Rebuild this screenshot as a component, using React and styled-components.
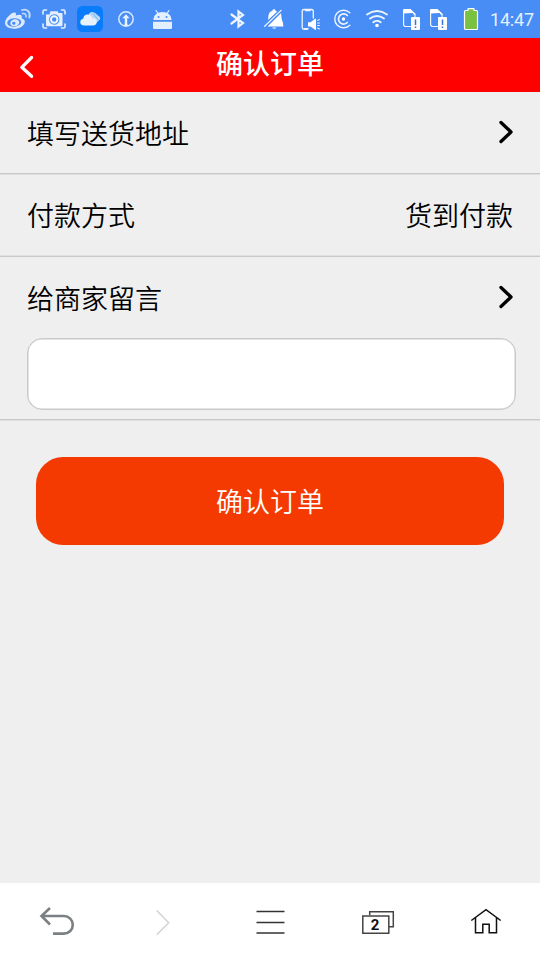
import React from 'react';
import styled, { createGlobalStyle } from 'styled-components';

const GlobalStyle = createGlobalStyle`
  * {
    box-sizing: border-box;
  }
  body {
    margin: 0;
    background: #efefef;
  }
`;

const Page = styled.div`
  display: flex;
  flex-direction: column;
  width: 540px;
  height: 960px;
  overflow: hidden;
  background: #efefef;
  color: #000;
  font-family: 'Noto Sans CJK SC', sans-serif;
  font-size: 27px;
  font-weight: 350;
`;

const StatusBar = styled.div`
  display: flex;
  justify-content: space-between;
  height: 38px;
  background: #488df5;
`;

const StatusGroup = styled.div`
  display: flex;
  align-items: center;
`;

const StatusIcon = styled.svg`
  display: block;
  width: ${props => props.width}px;
  height: 38px;
  fill: none;
  stroke-linecap: round;
  stroke-linejoin: round;
`;

const Clock = styled.span`
  width: 52px;
  padding: 1px 0 0 2px;
  color: #e4effe;
  font: 400 18px/38px Roboto, sans-serif;
  letter-spacing: -0.2px;
`;

const Header = styled.header`
  display: grid;
  grid-template-columns: 54px 1fr 54px;
  height: 54px;
  background: #f00;
  color: #fff;
`;

const Title = styled.h1`
  margin: 0;
  text-align: center;
  font-size: 27px;
  font-weight: 500;
  line-height: 50px;
`;

const BackButton = styled.button`
  display: flex;
  padding: 17px 0 0 19px;
  border: 0;
  background: none;
  color: #fff;
`;

const ChevronSvg = styled.svg`
  display: block;
  width: 15px;
  height: 24px;
  fill: none;
  stroke: currentColor;
  stroke-width: 3.3;
  stroke-linecap: round;
  stroke-linejoin: round;
`;

const Row = styled.div`
  display: flex;
  align-items: center;
  justify-content: space-between;
  height: ${props => props.height || 82}px;
  padding: 0 27px 2px;
  line-height: 40px;
`;

const LinkLabel = styled.span`
  padding-top: 2px;
`;

const Divider = styled.div`
  flex: none;
  height: 2px;
  margin-top: -1px;
  border-top: 1px solid ${props => (props.flip ? '#dfdfdf' : '#c9c9c9')};
  border-bottom: 1px solid ${props => (props.flip ? '#c9c9c9' : '#dfdfdf')};
`;

const MessageInput = styled.input`
  flex: none;
  height: 72px;
  margin: 0 24px 10px 27px;
  padding: 0 14px;
  border: 1px solid #c9c9c9;
  border-radius: 15px;
  background: #fff;
  box-shadow: inset 0 0 0 0.5px #c9c9c9;
  font: inherit;
  outline: none;
`;

const SubmitButton = styled.button`
  flex: none;
  height: 88.5px;
  margin: 35.5px 36px 0;
  padding: 0 0 1px;
  border: 0;
  border-radius: 27px;
  background: #f43a00;
  color: #fff;
  font: inherit;
`;

const NavBar = styled.nav`
  display: flex;
  height: 77px;
  margin-top: auto;
  background: #fff;
`;

const NavIcon = styled.svg`
  display: block;
  width: 108px;
  height: 77px;
  fill: none;
`;

const TabCount = styled.text`
  fill: #111;
  font: 700 15px Roboto, sans-serif;
  text-anchor: middle;
`;

const Chevron = ({ left }) => (
  <ChevronSvg viewBox="0 0 15 24">
    <path d={left ? 'M12.6 2.5 2.8 12.3l9.8 9' : 'M3 2.500 13 12 3 21.500'} />
  </ChevronSvg>
);

const Weibo = () => (
  <StatusIcon width={36} viewBox="0 0 36 38">
    <path
      fill="#dceafc"
      fillRule="evenodd"
      d="M14.5 12.5c1.6.2 1.8 1.4 1.3 3 3-1.3 6.3-1.4 6 1.6 0 .7-.3 1.2-.1 1.4 2.6.8 4 2.5 2.6 5.2C22.800 26.700 18.500 28.700 14 28.700 9 28.700 5 26.500 5 23c0-4.300 6.500-10.800 9.500-10.500ZM14 18.300c-4 .2-7 2.500-6.700 5 .3 2.400 3.500 3.800 7.200 3.400 4-.4 6.900-2.700 6.700-5-.3-2.300-3.300-3.600-7.200-3.400Z"
    />
    <path
      fill="#dceafc"
      fillRule="evenodd"
      d="M14.500 19.200c2.800-.3 5 1 4.800 3.200-.3 2.300-2.600 3.900-5 3.800-2.500 0-4.200-1.300-4-3.300.200-2 2-3.400 4.200-3.700Zm-.8 2.500a1.700 1.500 0 1 0 .1 3 1.700 1.500 0 1 0-.1-3Z"
    />
    <path stroke="#c8defb" strokeWidth="1.800" d="M22 10c5.500-1.600 9 2.500 7.300 7.500" />
    <path stroke="#c8defb" strokeWidth="1.500" d="M22.500 13.600c2.600-.5 4 1 3.500 3.300" />
  </StatusIcon>
);

const Camera = () => (
  <StatusIcon width={36} viewBox="0 0 36 38">
    <path
      stroke="#e4effe"
      strokeWidth="1.600"
      d="M10.500 10H8.500q-1.500 0-1.500 1.500V14M25.500 10H27.500q1.500 0 1.500 1.500V14M7 24v2.500Q7 28 8.500 28h2M29 24v2.500q0 1.500-1.500 1.500h-2"
    />
    <path
      fill="#e4effe"
      fillRule="evenodd"
      d="M14.500 11.300h7l1 1.700h3q1 0 1 1v11q0 1.300-1.300 1.300H11.300Q10 26.300 10 25V14.500h3.500ZM18.200 14.300a5.200 5.200 0 1 0 .1 10.400 5.200 5.200 0 1 0-.1-10.400Z"
    />
    <circle cx="18.200" cy="19.500" r="3.200" stroke="#f2f8ff" strokeWidth="2" />
  </StatusIcon>
);

const Cloud = () => (
  <StatusIcon width={36} viewBox="0 0 36 38">
    <rect x="5" y="6" width="26" height="26" rx="5.500" fill="#087cfb" />
    <path
      fill="#b7d7f5"
      d="M16.500 15c.6-2 2.300-3.200 4.500-2.800l1.800.5 4.200 3.500c1.400.8 1.900 3.300-.2 4.300L22 25Z"
    />
    <path
      fill="#e8f2fb"
      d="M12.500 25.500c-3 0-4.300-1.500-4.200-3.500 0-1.800 1.200-3 2.900-3.300.2-3 2.400-4.500 4.500-4.300 2.500.1 4 1.500 4.600 3.800 2.800-.2 4.500 1.300 4.500 3.600s-1.500 3.700-3.800 3.700Z"
    />
    <path stroke="#6baef5" strokeWidth=".8" d="m21 13.500 5 6" />
  </StatusIcon>
);

const Upload = () => (
  <StatusIcon width={36} viewBox="0 0 36 38">
    <circle cx="18" cy="19" r="7.200" stroke="#dceafc" strokeWidth="1.500" />
    <path
      fill="#e8f2fe"
      d="m18 14.300 3.700 3.900h-2.500v5q0 1.900 1.500 2.400-2.700.8-5.400 0 1.500-.5 1.500-2.400v-5h-2.500Z"
    />
  </StatusIcon>
);

const Android = () => (
  <StatusIcon width={36} viewBox="0 0 36 38">
    <path stroke="#e4effe" strokeWidth="1.200" d="m12 10.500 2 3m11-3-2 3" />
    <path
      fill="#e4effe"
      fillRule="evenodd"
      d="M9.500 20c0-5 3.700-8 9-8s9 3 9 8ZM14.500 16a1 1 0 1 0 .1 2 1 1 0 1 0-.1-2Zm8 0a1 1 0 1 0 .1 2 1 1 0 1 0-.1-2Z"
    />
    <path fill="#e4effe" d="M9 21.800h19v6q0 1.200-1.200 1.200H10.200Q9 29 9 27.800Z" />
  </StatusIcon>
);

const Bluetooth = () => (
  <StatusIcon width={36} viewBox="0 0 36 38">
    <path
      stroke="#eef5ff"
      strokeWidth="2.200"
      strokeLinejoin="miter"
      d="m11.500 14.500 11.500 8.500-4.500 3.500V11.500l4.500 3.500-11.500 8.500"
    />
  </StatusIcon>
);

const MutedBell = () => (
  <StatusIcon width={36} viewBox="0 0 36 38">
    <path
      fill="#fff"
      d="M12.300 18.200c0-4.500 1.500-6.900 4-7.200 0-2.500 3.400-2.500 3.400 0l1.500.5-9 8.500ZM25 12.300c.4 4.500.5 8.400 2.300 10.700v3.500H11.500Z"
    />
    <path fill="#fff" d="M23.500 14c.7 6 1.500 9 3.800 12H12Z" />
    <path fill="#eef5ff" d="M16 27.500h4.500q-2.200 2.500-4.500 0Z" />
    <path stroke="#eef5ff" strokeWidth="1.300" d="M8.700 26.300 25 10.500" />
    <path stroke="#488df5" strokeWidth="1.200" d="M10.800 26.300 24.800 12.500M27.800 20.500v4" />
  </StatusIcon>
);

const PhoneSound = () => (
  <StatusIcon width={35} viewBox="0 0 35 38">
    <path
      stroke="#eef5ff"
      strokeWidth="1.300"
      d="M15 29.300h-3q-1.800 0-1.800-1.800V11.300q0-1.800 1.800-1.800h7.500q1.800 0 1.800 1.800V18"
    />
    <path stroke="#eef5ff" strokeWidth="1.500" d="M13.500 10.500H18M12.500 28.700H16" />
    <path
      fill="#fff"
      d="M16 22.300h2.500l5-3.700q.5-.3.500.5v10.500q0 .8-.5.500l-5-3.500H16Z"
    />
    <path
      stroke="#dceafc"
      strokeWidth="1.100"
      d="m25.500 20.500 2-1m-2 3.500h2m-2 2.500h2m-2 2.500 2 1"
    />
  </StatusIcon>
);

const Nfc = () => (
  <StatusIcon width={31} viewBox="0 0 31 38">
    <path stroke="#eef5ff" strokeWidth="1.400" d="M22.800 12.800a8.800 8.800 0 1 0 0 12.400" />
    <path stroke="#eef5ff" strokeWidth="1.700" d="M20.300 15.500a5.100 5.100 0 1 0 0 7" />
    <circle cx="16.500" cy="19" r="1.700" fill="#fff" />
  </StatusIcon>
);

const Wifi = () => (
  <StatusIcon width={40} viewBox="0 0 40 38">
    <path
      stroke="#eef5ff"
      strokeWidth="1.900"
      d="M9 14.500q10-7 20 0M12 18.500q7-5 14 0M15.300 22.200q3.700-2.600 7.400 0"
    />
    <circle cx="19" cy="25.500" r="1.800" fill="#fff" />
  </StatusIcon>
);

const SimAlert = () => (
  <StatusIcon width={27} viewBox="0 0 27 38">
    <path stroke="#eef5ff" strokeWidth="1.200" d="M5.600 12v13.200L7 26.500h5.500M17 14.500V17" />
    <path fill="#fff" d="M5 13.500V10q0-1 1-1h6.500l5 4.700v1H16L14.500 13Z" />
    <rect x="13" y="17" width="9" height="13" rx="1" fill="#fff" />
    <path stroke="#2f75df" strokeWidth="1.500" strokeLinecap="butt" d="M17.500 19.500v5.500m0 1.500V28" />
  </StatusIcon>
);

const Battery = () => (
  <StatusIcon width={36} viewBox="0 0 36 38">
    <path
      fill="#7ac142"
      stroke="#fff"
      strokeWidth="1.200"
      d="M13.500 10.500H16V8.700h6v1.800h2.500q1 0 1 1v17q0 1-1 1h-11q-1 0-1-1v-17q0-1 1-1Z"
    />
  </StatusIcon>
);

const BottomNav = () => (
  <NavBar>
    <NavIcon viewBox="0 0 108 77" stroke="#7b8083" strokeWidth="2.600">
      <path d="m50 25-8.500 8L50 41.500M41.500 33H64a8.800 8.800 0 0 1 0 17.600H53" />
    </NavIcon>
    <NavIcon viewBox="0 0 108 77" stroke="#cfcfcf" strokeWidth="1.300">
      <path d="m48.700 27.500 12 12.300-12 12" />
    </NavIcon>
    <NavIcon viewBox="0 0 108 77" stroke="#333" strokeWidth="1.500">
      <path d="M40.500 28.500h28M40.500 39.500h28M40.500 50h28" />
    </NavIcon>
    <NavIcon viewBox="0 0 108 77" stroke="#444" strokeWidth="1.500">
      <path d="M45.700 32v-3.300h23.600v15H65M38.800 33h26v17.300h-26Z" />
      <TabCount x="51" y="47.300" stroke="none">
        2
      </TabCount>
    </NavIcon>
    <NavIcon viewBox="0 0 108 77" stroke="#111" strokeWidth="1.500">
      <path d="M39.300 37.500 54 26.700l14.700 10.800M43.500 34.500v15.200h7.300v-8.400h6.400v8.400h7.300V34.500" />
    </NavIcon>
  </NavBar>
);

const App = () => {
  return (
    <Page>
      <GlobalStyle />
      <StatusBar>
        <StatusGroup>
          <Weibo />
          <Camera />
          <Cloud />
          <Upload />
          <Android />
        </StatusGroup>
        <StatusGroup>
          <Bluetooth />
          <MutedBell />
          <PhoneSound />
          <Nfc />
          <Wifi />
          <SimAlert />
          <SimAlert />
          <Battery />
          <Clock>14:47</Clock>
        </StatusGroup>
      </StatusBar>
      <Header>
        <BackButton aria-label="返回">
          <Chevron left />
        </BackButton>
        <Title>确认订单</Title>
      </Header>
      <Row>
        <LinkLabel>填写送货地址</LinkLabel>
        <Chevron />
      </Row>
      <Divider />
      <Row height={81}>
        <span>付款方式</span>
        <span>货到付款</span>
      </Row>
      <Divider flip />
      <Row height={81}>
        <LinkLabel>给商家留言</LinkLabel>
        <Chevron />
      </Row>
      <MessageInput aria-label="给商家留言" />
      <Divider />
      <SubmitButton>确认订单</SubmitButton>
      <BottomNav />
    </Page>
  );
};

export default App;
